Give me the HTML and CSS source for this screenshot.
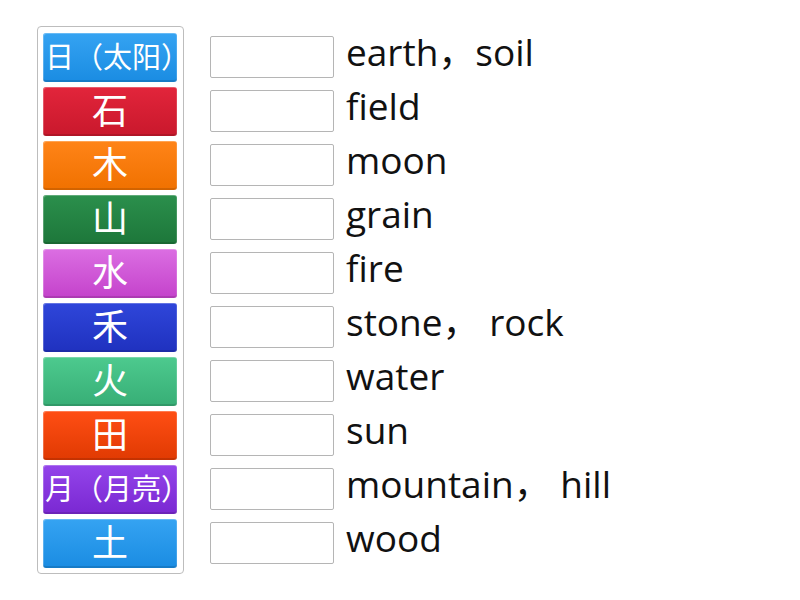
FILE: index.html
```html
<!DOCTYPE html>
<html>
<head>
<meta charset="utf-8">
<link rel="stylesheet" href="styles.css">
</head>
<body>
<div class="page">
  <div class="tiles">
    <div class="tile t-blue small">日（太阳）</div>
    <div class="tile t-red">石</div>
    <div class="tile t-orange">木</div>
    <div class="tile t-green">山</div>
    <div class="tile t-magenta">水</div>
    <div class="tile t-navy">禾</div>
    <div class="tile t-mint">火</div>
    <div class="tile t-flame">田</div>
    <div class="tile t-purple small">月（月亮）</div>
    <div class="tile t-blue">土</div>
  </div>
  <div class="answers">
    <div class="row"><div class="slot"></div><span class="word">earth，soil</span></div>
    <div class="row"><div class="slot"></div><span class="word">field</span></div>
    <div class="row"><div class="slot"></div><span class="word">moon</span></div>
    <div class="row"><div class="slot"></div><span class="word">grain</span></div>
    <div class="row"><div class="slot"></div><span class="word">fire</span></div>
    <div class="row"><div class="slot"></div><span class="word">stone， rock</span></div>
    <div class="row"><div class="slot"></div><span class="word">water</span></div>
    <div class="row"><div class="slot"></div><span class="word">sun</span></div>
    <div class="row"><div class="slot"></div><span class="word">mountain， hill</span></div>
    <div class="row"><div class="slot"></div><span class="word">wood</span></div>
  </div>
</div>
</body>
</html>
```
FILE: styles.css
```css
html, body {
  margin: 0;
  padding: 0;
  background: #fff;
}
body {
  font-family: "Open Sans", "Noto Sans CJK SC", sans-serif;
}
.page {
  display: flex;
  align-items: flex-start;
  padding: 26px 0 0 37px;
}
.tiles {
  width: 134px;
  border: 1px solid #bdbdbd;
  border-radius: 4px;
  padding: 6px 6px 5px 5px;
  display: flex;
  flex-direction: column;
  gap: 5px;
}
.tile {
  height: 49px;
  line-height: 43px;
  padding: 0 2px 6px;
  box-sizing: border-box;
  border-radius: 3px;
  text-align: center;
  color: #fff;
  font-family: "Noto Sans CJK SC", sans-serif;
  font-size: 36px;
  white-space: nowrap;
  text-spacing-trim: space-all;
  box-shadow: inset 1px 1px 0 rgba(255,255,255,0.25), inset -1px 0 0 rgba(255,255,255,0.15), inset 0 -2px 0 rgba(0,0,0,0.12);
}
.tile.small {
  font-family: "Noto Sans CJK JP", "Noto Sans CJK SC", sans-serif;
  font-size: 29px;
  line-height: 45px;
  padding-bottom: 4px;
}
.t-blue { background: linear-gradient(#35a3f2, #1a8ce2); }
.t-red { background: linear-gradient(#e2253b, #c9182c); }
.t-orange { background: linear-gradient(#ff8418, #f07100); }
.t-green { background: linear-gradient(#2b8f4c, #1d773a); }
.t-magenta { background: linear-gradient(#db6ee2, #c442cb); }
.t-navy { background: linear-gradient(#2f46da, #1f31bf); }
.t-mint { background: linear-gradient(#4dca8e, #37ae76); }
.t-flame { background: linear-gradient(#ff4e14, #e03a02); }
.t-purple { background: linear-gradient(#9344ea, #7a28d2); }
.answers {
  margin-left: 26px;
  padding-top: 10px;
  display: flex;
  flex-direction: column;
  gap: 12px;
}
.row {
  display: flex;
  align-items: center;
  height: 42px;
}
.slot {
  width: 122px;
  height: 40px;
  border: 1px solid #b5b5b5;
  border-radius: 2px;
  flex: none;
}
.word {
  margin-left: 12px;
  margin-bottom: 12px;
  font-size: 37px;
  color: #111;
  white-space: pre;
  line-height: 1;
}
```
